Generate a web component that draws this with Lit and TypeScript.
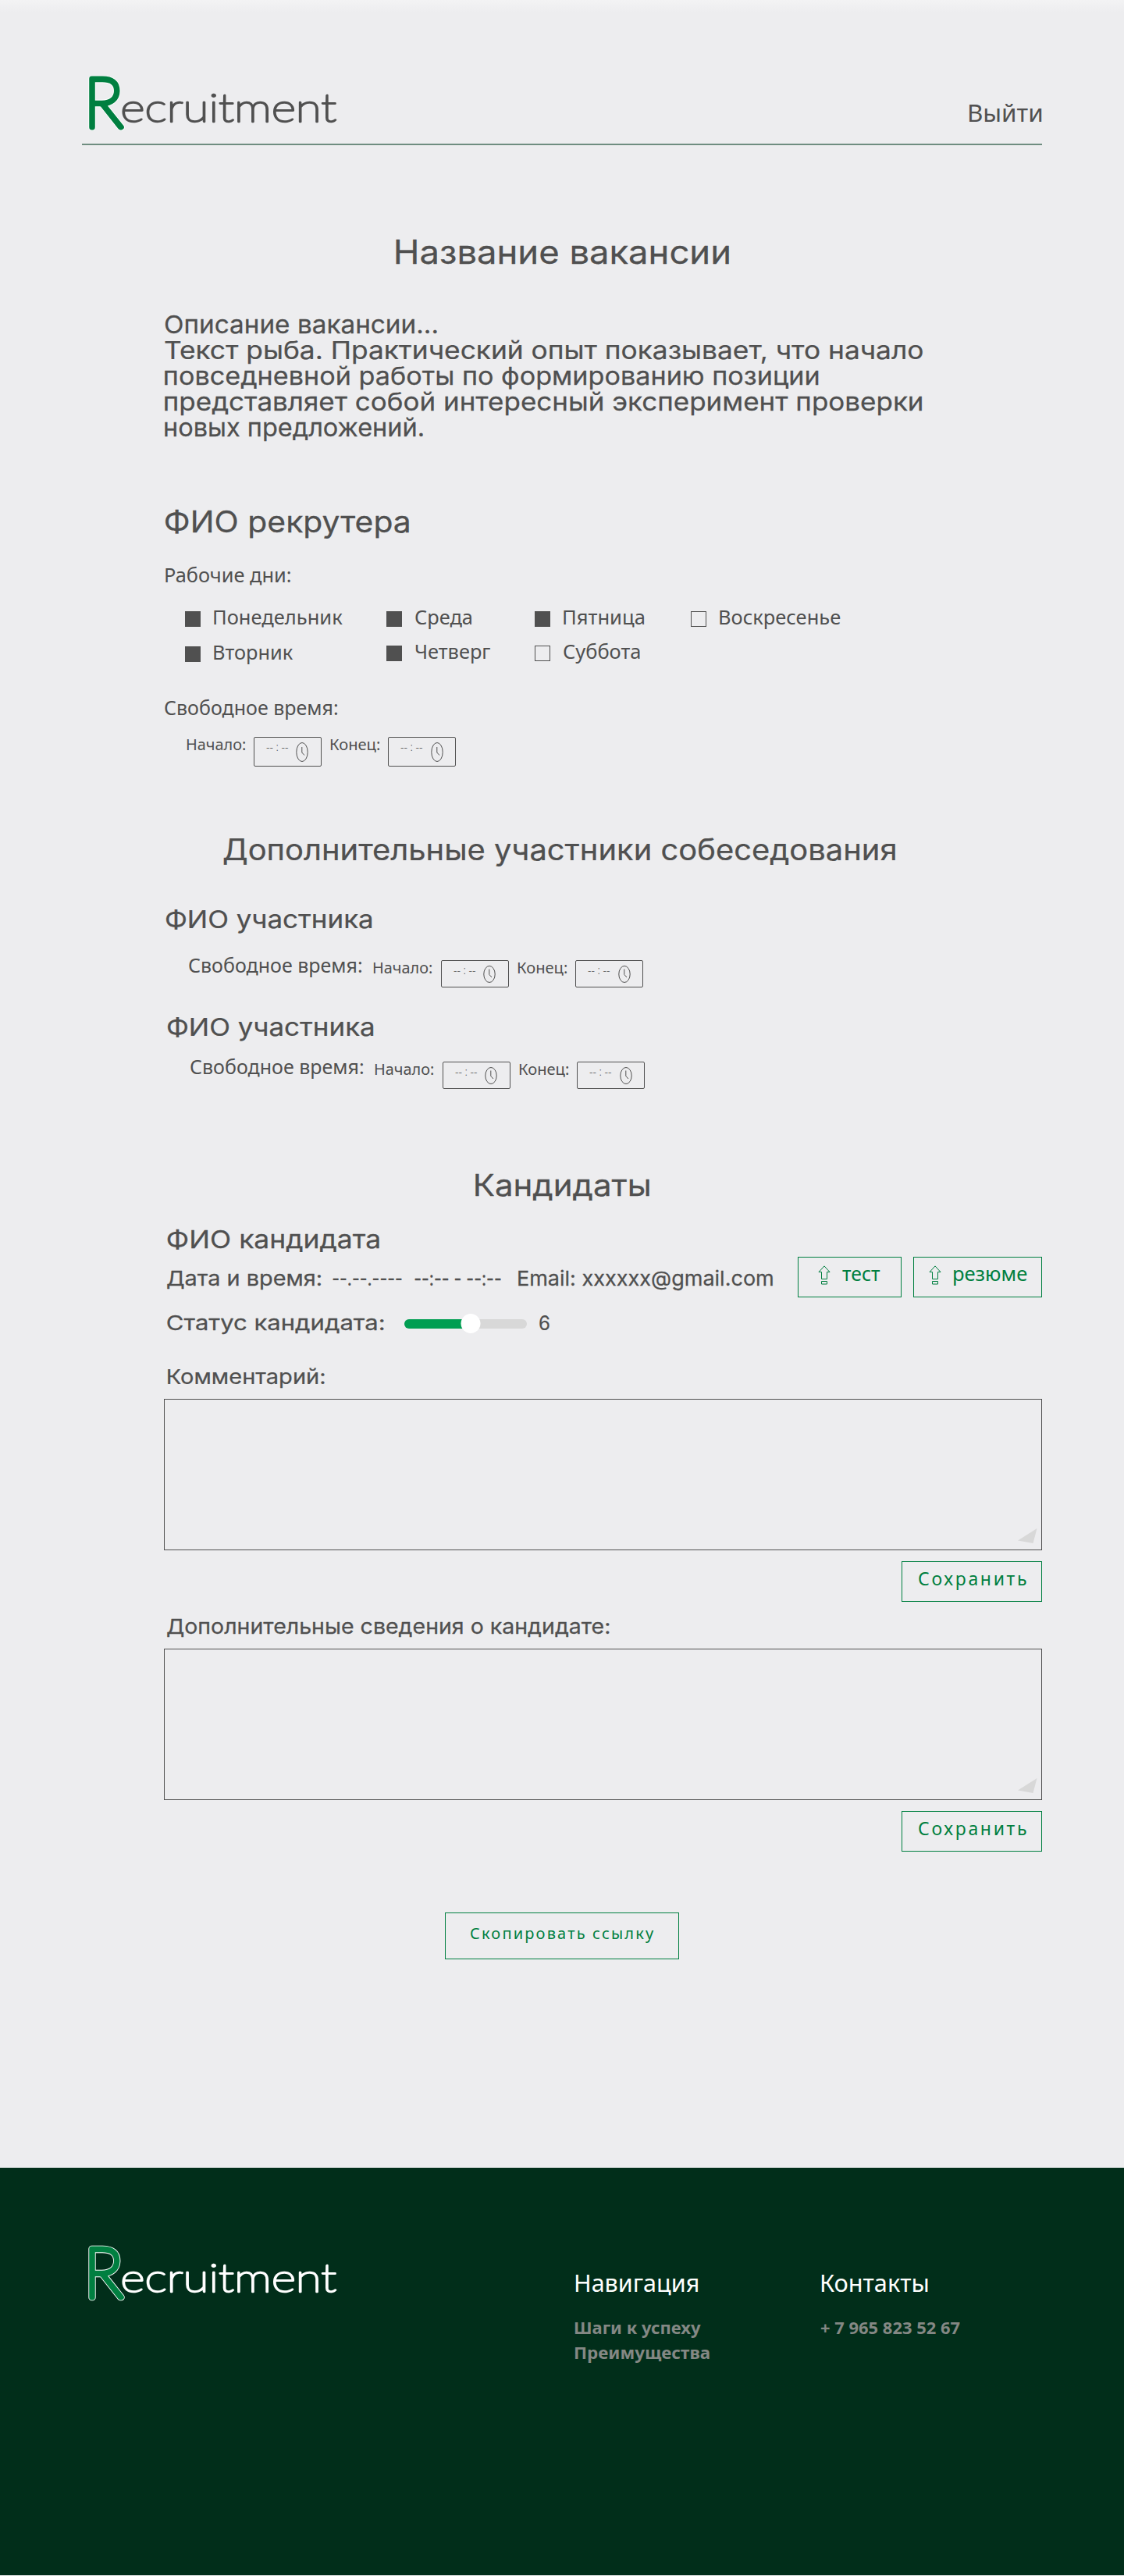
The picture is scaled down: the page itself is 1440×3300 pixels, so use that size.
import { LitElement, html, svg, css } from "lit";
import { customElement, property } from "lit/decorators.js";
import { classMap } from "lit/directives/class-map.js";

const pen = document.createElement("canvas").getContext("2d")!;

/** One line of text set to an exact width; the baseline is the bottom edge of the element. */
@customElement("fit-line")
class FitLine extends LitElement {
  @property() text = "";
  @property() font = "Noto Sans";
  @property({ type: Number }) size = 25;
  @property({ type: Number }) weight = 400;
  @property({ type: Number }) width = 0;
  @property({ type: Number }) height = 0;
  @property({ type: Boolean }) spaced = false;

  static styles = css`
    :host { display: block; flex: none; }
    svg { display: block; overflow: visible; }
    text { fill: currentColor; white-space: pre; }
    .soft { stroke: currentColor; stroke-width: 0.25px; stroke-linejoin: round; }
  `;

  render() {
    pen.font = `${this.weight} ${this.size}px "${this.font}"`;
    const m = pen.measureText(this.text);
    const ink = m.actualBoundingBoxRight + m.actualBoundingBoxLeft;
    const h = this.height || Math.round(this.size);
    const k = this.spaced ? 1 : this.width / ink;
    const gap = this.spaced ? (this.width - ink) / (this.text.length - 1) : 0;
    const soft = this.font !== "Noto Sans";
    return html`<svg width=${this.width} height=${h}>
      ${svg`<text class=${soft ? "soft" : ""}
        transform="translate(${m.actualBoundingBoxLeft * k} ${soft ? h + 0.8 : h}) scale(${k} 1)"
        font-family="${this.font}, sans-serif" font-size=${this.size} font-weight=${this.weight}
        letter-spacing=${gap}>${this.text}</text>`}
    </svg>`;
  }
}

@customElement("brand-logo")
class BrandLogo extends LitElement {
  static styles = css`
    :host { display: block; width: 330px; height: 90px; }
    svg { display: block; overflow: visible; }
    text { font-family: Lato, sans-serif; font-weight: 100; stroke-linejoin: round; stroke-linecap: round; }
    .halo { font-size: 87.5px; fill: #fff; stroke: #fff; stroke-width: 8.6px; }
    .initial { font-size: 87.5px; fill: #007f40; stroke: #007f40; stroke-width: 6.8px; }
    .rest { font-size: 49.5px; fill: currentColor; stroke: currentColor; stroke-width: 2.4px; }
  `;

  render() {
    pen.font = `100 87.5px Lato`;
    const r = pen.measureText("R");
    const rk = 38.5 / (r.actualBoundingBoxRight + r.actualBoundingBoxLeft);
    pen.font = `100 49.5px Lato`;
    const e = pen.measureText("ecruitment");
    const ek = 273 / (e.actualBoundingBoxRight + e.actualBoundingBoxLeft);
    const rt = `translate(${12.3 + r.actualBoundingBoxLeft * rk} 72.6) scale(${rk} 1)`;
    const et = `translate(${53 + e.actualBoundingBoxLeft * ek} 65.9) scale(${ek} 1)`;
    return html`<svg width="330" height="90">
      ${svg`<text class="halo" transform=${rt} aria-hidden="true">R</text>
      <text class="initial" transform=${rt}>R</text>
      <text class="rest" transform=${et}>ecruitment</text>`}
    </svg>`;
  }
}

@customElement("time-box")
class TimeBox extends LitElement {
  @property({ type: Number }) height = 38;
  static styles = css`
    :host { display: block; flex: none; }
    .box { box-sizing: border-box; width: 87px; border: 1px solid #505050; border-radius: 2px; display: flex; align-items: flex-start; padding-left: 15px; color: #505050; }
    fit-line { margin-top: 5px; }
    svg { display: block; margin: 6px 0 0 10.5px; fill: none; stroke: #505050; stroke-width: 1; }
  `;
  render() {
    const h = this.height - 13;
    const c = h / 2;
    return html`<div class="box" style="height:${this.height}px">
      <fit-line text="-- : --" size="14" weight="300" width="28" height="12"></fit-line>
      <svg width="16" height=${h}>
        <ellipse cx="8" cy=${c} rx="7.2" ry=${c - 0.5}></ellipse>
        <path d="M7.8 ${c - 6.5}V${c + 0.5}L11 ${c + 4}"></path>
      </svg>
    </div>`;
  }
}

const CF = "Inter";

interface Day { name: string; width: number; on: boolean; low?: boolean }
const days: Day[] = [
  { name: "Понедельник", width: 165.5, on: true },
  { name: "Среда", width: 72, on: true },
  { name: "Пятница", width: 103, on: true },
  { name: "Воскресенье", width: 154.5, on: false },
  { name: "Вторник", width: 102, on: true, low: true },
  { name: "Четверг", width: 96.5, on: true },
  { name: "Суббота", width: 97.5, on: false },
];

const description: [string, number][] = [
  ["Описание вакансии...", 349],
  ["Текст рыба. Практический опыт показывает, что начало", 972],
  ["повседневной работы по формированию позиции", 838],
  ["представляет собой интересный эксперимент проверки", 971],
  ["новых предложений.", 331],
];

@customElement("app-root")
class AppRoot extends LitElement {
  static styles = css`
    :host { display: block; width: 1440px; height: 3300px; color: #505050; font-family: "Noto Sans", sans-serif;
      background: linear-gradient(#f3f3f4, #ededef 16px); }
    .header { box-sizing: border-box; height: 186px; margin: 0 105px; padding-top: 90px; border-bottom: 2px solid #6f8d80; display: flex; justify-content: space-between; align-items: flex-start; }
    .logout { margin-top: 36px; }
    .main { display: flex; flex-direction: column; align-items: flex-start; padding: 0 105px 0 210px; height: 2591px; box-sizing: border-box; }
    .title { margin: 109px 0 0 296.6px; }
    .description { margin: 56px 0 0 1px; }
    .recruiter { margin: 85px 0 0 1.7px; }
    .label { margin: 40px 0 0 1.7px; }
    .days { margin: 37px 0 0 27px; display: grid; grid-template-columns: 258px 190px 200px auto; grid-auto-rows: 20px; row-gap: 24px; }
    .day { display: flex; align-items: flex-end; gap: 16.5px; }
    .day.low { margin: 1px 0 -1px; }
    .day fit-line { margin-bottom: 3px; }
    .tick { box-sizing: border-box; width: 20px; height: 20px; border: 1px solid #505050; }
    .tick.on { background: #505050; }
    .free { margin: 44px 0 0 1.3px; }
    .slot { display: flex; align-items: flex-start; gap: 11.3px; }
    .slot.own { margin: 28px 0 0 28.5px; }
    .slot.first { margin: 42px 0 0 32px; }
    .slot.second { margin: 34px 0 0 34px; }
    .caption { margin-right: 4px; }
    .extra { margin: 81px 0 0 75.6px; }
    .member { margin: 55px 0 0 2.2px; }
    .member.next { margin: 29px 0 0 4.1px; }
    .candidates { margin: 98px 0 0 398.6px; }
    .candidate { margin: 35px 0 0 4.2px; }
    .meta { margin: 12px 0 0 3.5px; display: flex; align-items: flex-start; }
    .date { margin-left: 15px; }
    .hours { margin-left: 16px; }
    .mail { margin: 0 32px 0 22px; }
    .button { box-sizing: border-box; height: 52px; border: 1px solid #007f40; color: #007f40; display: flex; align-items: flex-start; }
    .arrow { display: block; fill: none; stroke: #007f40; stroke-width: 1; margin-top: 10px; }
    .test { width: 133px; padding-left: 25px; gap: 15px; margin-right: 15px; }
    .resume { width: 165px; padding-left: 19px; gap: 16px; }
    .status { margin: 21px 0 0 4px; height: 25px; display: flex; align-items: flex-start; }
    .slider { position: relative; width: 157px; height: 12px; margin: 7px 16px 0 26px; border-radius: 6px; background: #d8d8d8; }
    .fill { height: 12px; border-radius: 6px; background: #009e52; }
    .thumb { position: absolute; top: -7px; width: 25px; height: 25px; border-radius: 50%; background: #fff; transform: translateX(-50%); }
    .comment { margin: 39px 0 0 4.7px; }
    .details { margin: 15px 0 0 3.7px; }
    .area { box-sizing: border-box; width: 1125px; height: 194px; margin-top: 20px; border: 1px solid #505050; display: flex; align-items: flex-end; justify-content: flex-end; }
    .area svg { display: block; margin: 0 5px 8px 0; fill: #d8d8d8; }
    .save { width: 180px; margin-top: 14px; padding: 13px 0 0 21px; align-self: flex-end; }
    .copy { width: 300px; height: 60px; margin: 78px 0 0 360px; padding: 13px 0 0 32px; }
    .footer { box-sizing: border-box; height: 522px; background: #012e1a; color: #fff; padding: 93px 105px 0; display: flex; align-items: flex-start; }
    .nav { margin: 36px 0 0 301.7px; width: 315px; }
    .contacts { margin-top: 36px; }
    .dim { color: #848884; }
    .nav .dim, .contacts .dim { margin: 32px 0 0 -1px; }
    .nav .dim + .dim { margin-top: 10px; }
  `;

  private line(cls: string, text: string, size: number, width: number, height = 0, font = CF) {
    return html`<fit-line class=${cls} .text=${text} .size=${size} .width=${width} .height=${height} .font=${font}></fit-line>`;
  }

  private note(cls: string, text: string, size: number, width: number, height = 0) {
    return this.line(cls, text, size, width, height, "Noto Sans");
  }

  private times(boxHeight: number) {
    return html`${this.note("", "Начало:", 20, 75, 17)}<time-box .height=${boxHeight}></time-box>
      ${this.note("", "Конец:", 20, 63, 17)}<time-box .height=${boxHeight}></time-box>`;
  }

  private arrow() {
    return html`<svg class="arrow" width="16" height="25">
      <path d="M8 .9L15 8.5H11.5V17.5H4.5V8.5H1ZM4.5 20.5H11.5V24H4.5Z"></path>
    </svg>`;
  }

  private area() {
    return html`<div class="area"><svg width="25" height="19"><path d="M0 15.5L24.5 0L19.5 19Z"></path></svg></div>
      <div class="button save">
        <fit-line text="Сохранить" size="23" width="138" height="17" spaced></fit-line>
      </div>`;
  }

  render() {
    return html`
      <header class="header">
        <brand-logo></brand-logo>
        ${this.note("logout", "Выйти", 30, 94, 30)}
      </header>
      <main class="main">
        ${this.line("title", "Название вакансии", 42, 427)}
        <div class="description">${description.map(([t, w]) => this.line("", t, 31.5, w, 33))}</div>

        ${this.line("recruiter", "ФИО рекрутера", 37.5, 312.6, 38)}
        ${this.note("label", "Рабочие дни:", 25, 160)}
        <div class="days">
          ${days.map((d) => html`<div class=${classMap({ day: true, low: !!d.low })}>
            <div class=${classMap({ tick: true, on: d.on })}></div>
            ${this.note("", d.name, 25, d.width, 17)}
          </div>`)}
        </div>
        ${this.note("free", "Свободное время:", 25, 221)}
        <div class="slot own">${this.times(38)}</div>

        ${this.line("extra", "Дополнительные участники собеседования", 37.5, 861, 38)}
        ${this.line("member", "ФИО участника", 31.5, 265, 32)}
        <div class="slot first">${this.note("caption", "Свободное время:", 25, 221, 16)}${this.times(35)}</div>
        ${this.line("member next", "ФИО участника", 31.5, 265, 32)}
        <div class="slot second">${this.note("caption", "Свободное время:", 25, 221, 16)}${this.times(35)}</div>

        ${this.line("candidates", "Кандидаты", 37.5, 223, 38)}
        ${this.line("candidate", "ФИО кандидата", 31.5, 272.5, 32)}
        <div class="meta">
          ${this.line("", "Дата и время:", 26, 197.5, 36)}
          ${this.line("date", "--.--.----", 26, 89, 36)}
          ${this.line("hours", "--:-- - --:--", 26, 111, 36)}
          ${this.line("mail", "Email: xxxxxx@gmail.com", 26, 326, 36)}
          <div class="button test">${this.arrow()}${this.note("", "тест", 25, 49, 30)}</div>
          <div class="button resume">${this.arrow()}${this.note("", "резюме", 25, 93.5, 30)}</div>
        </div>
        <div class="status">
          ${this.line("", "Статус кандидата:", 26, 278, 20)}
          <div class="slider">
            <div class="fill" style="width:54%"></div>
            <div class="thumb" style="left:54%"></div>
          </div>
          ${this.line("", "6", 26, 13, 20)}
        </div>

        ${this.line("comment", "Комментарий:", 26, 201, 25)}
        ${this.area()}
        ${this.line("details", "Дополнительные сведения о кандидате:", 26, 567, 25)}
        ${this.area()}
        <div class="button copy">
          <fit-line text="Скопировать ссылку" size="20" width="235" height="20" spaced></fit-line>
        </div>
      </main>
      <footer class="footer">
        <brand-logo></brand-logo>
        <div class="nav">
          ${this.note("", "Навигация", 30, 157)}
          <fit-line class="dim" text="Шаги к успеху" size="22" weight="700" width="162"></fit-line>
          <fit-line class="dim" text="Преимущества" size="22" weight="700" width="173"></fit-line>
        </div>
        <div class="contacts">
          ${this.note("", "Контакты", 30, 137)}
          <fit-line class="dim" text="+ 7 965 823 52 67" size="22" weight="700" width="178.6"></fit-line>
        </div>
      </footer>
    `;
  }
}
